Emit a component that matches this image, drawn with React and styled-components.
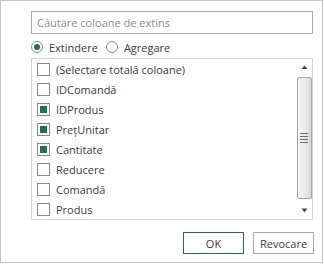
import React, { useState } from "react";
import styled, { createGlobalStyle } from "styled-components";

const GlobalStyle = createGlobalStyle`
    body {
        margin: 0;
        background: #ffffff;
        font-family: "Open Sans", "Noto Sans", sans-serif;
    }
`

const Panel = styled.div`
    box-sizing: border-box;
    width: 323px;
    height: 263px;
    border: 1px solid #c6c6c6;
    padding: 10px 8px 0 30px;
    display: flex;
    flex-direction: column;
    background: #ffffff;
`
const SearchInput = styled.input`
    box-sizing: border-box;
    width: 282px;
    height: 23px;
    border: 1px solid #ababab;
    padding: 0 5px;
    font-family: "Open Sans", "Noto Sans", sans-serif;
    font-size: 11px;
    color: #3a3a3a;
    outline: none;
    &::placeholder {
        color: #8c8c8c;
    }
`
const RadioRow = styled.div`
    box-sizing: border-box;
    height: 24px;
    padding-top: 2px;
    display: flex;
    align-items: center;
`
const RadioLabel = styled.label`
    display: flex;
    align-items: center;
    gap: 6px;
    margin-right: 8px;
    font-size: 11px;
    color: #3a3a3a;
    cursor: pointer;
`
const RadioCircle = styled.span`
    box-sizing: border-box;
    width: 12px;
    height: 12px;
    border-radius: 50%;
    border: 1px solid #8a8a8a;
    display: flex;
    align-items: center;
    justify-content: center;
    &::after {
        content: "";
        width: 6px;
        height: 6px;
        border-radius: 50%;
        background: ${(p) => (p.checked ? "#217346" : "transparent")};
    }
`
const ListBox = styled.div`
    box-sizing: border-box;
    width: 282px;
    height: 162px;
    border: 1px solid #d6d6d6;
    display: flex;
`
const Items = styled.div`
    flex: 1;
    display: flex;
    flex-direction: column;
`
const Row = styled.label`
    height: 20px;
    display: flex;
    align-items: center;
    gap: 6px;
    padding-left: 5px;
    font-size: 11px;
    color: #3a3a3a;
    cursor: pointer;
`
const CheckBox = styled.span`
    box-sizing: border-box;
    width: 13px;
    height: 13px;
    border: 1px solid #8a8a8a;
    padding: 2px;
    background: #ffffff;
    &::after {
        content: "";
        display: block;
        width: 7px;
        height: 7px;
        background: ${(p) => (p.checked ? "#217346" : "transparent")};
    }
`
const ScrollBar = styled.div`
    width: 16px;
    display: flex;
    flex-direction: column;
    align-items: center;
    background: #ffffff;
`
const ArrowBtn = styled.div`
    width: 16px;
    height: 17px;
    display: flex;
    align-items: center;
    justify-content: center;
`
const Track = styled.div`
    flex: 1;
    width: 16px;
    display: flex;
    flex-direction: column;
    align-items: center;
    padding: 1px 0 3px;
    box-sizing: border-box;
`
const Thumb = styled.div`
    box-sizing: border-box;
    width: 15px;
    height: 122px;
    border: 1px solid #a6a6a6;
    border-radius: 2px;
    background: linear-gradient(to right, #f7f7f7 0%, #ececec 45%, #d9d9d9 100%);
    display: flex;
    align-items: center;
    justify-content: center;
`
const Grip = styled.div`
    width: 8px;
    display: flex;
    flex-direction: column;
    gap: 2px;
    span {
        display: block;
        height: 1px;
        background: #6e6e6e;
    }
`
const Footer = styled.div`
    margin-top: 12px;
    display: flex;
    justify-content: flex-end;
    gap: 9px;
`
const Button = styled.button`
    box-sizing: border-box;
    width: 61px;
    height: 22px;
    background: #ffffff;
    border: 1px solid ${(p) => (p.primary ? "#217346" : "#ababab")};
    font-family: "Open Sans", "Noto Sans", sans-serif;
    font-size: 11px;
    color: #3a3a3a;
    padding: 0;
    cursor: pointer;
`

const columns = [
    { name: "(Selectare totală coloane)", checked: false },
    { name: "IDComandă", checked: false },
    { name: "IDProdus", checked: true },
    { name: "PrețUnitar", checked: true },
    { name: "Cantitate", checked: true },
    { name: "Reducere", checked: false },
    { name: "Comandă", checked: false },
    { name: "Produs", checked: false },
]

const App = () => {
    const [mode, setMode] = useState("extindere")
    const [items, setItems] = useState(columns)

    const toggle = (i) => {
        setItems(items.map((it, idx) => (idx === i ? { ...it, checked: !it.checked } : it)))
    }

    return (
        <>
            <GlobalStyle />
            <Panel>
                <SearchInput placeholder="Căutare coloane de extins" />
                <RadioRow>
                    <RadioLabel onClick={() => setMode("extindere")}>
                        <RadioCircle checked={mode === "extindere"} />
                        Extindere
                    </RadioLabel>
                    <RadioLabel onClick={() => setMode("agregare")}>
                        <RadioCircle checked={mode === "agregare"} />
                        Agregare
                    </RadioLabel>
                </RadioRow>
                <ListBox>
                    <Items>
                        {items.map((it, i) => (
                            <Row key={it.name} onClick={() => toggle(i)}>
                                <CheckBox checked={it.checked} />
                                {it.name}
                            </Row>
                        ))}
                    </Items>
                    <ScrollBar>
                        <ArrowBtn>
                            <svg width="7" height="5" viewBox="0 0 7 5">
                                <path d="M3.5 0.5 L6.5 4 L0.5 4 Z" fill="#4a4a4a" />
                            </svg>
                        </ArrowBtn>
                        <Track>
                            <Thumb>
                                <Grip>
                                    <span /><span /><span /><span />
                                </Grip>
                            </Thumb>
                        </Track>
                        <ArrowBtn>
                            <svg width="7" height="5" viewBox="0 0 7 5">
                                <path d="M0.5 0.5 L6.5 0.5 L3.5 4.5 Z" fill="#4a4a4a" />
                            </svg>
                        </ArrowBtn>
                    </ScrollBar>
                </ListBox>
                <Footer>
                    <Button primary>OK</Button>
                    <Button>Revocare</Button>
                </Footer>
            </Panel>
        </>
    )
}

export default App
